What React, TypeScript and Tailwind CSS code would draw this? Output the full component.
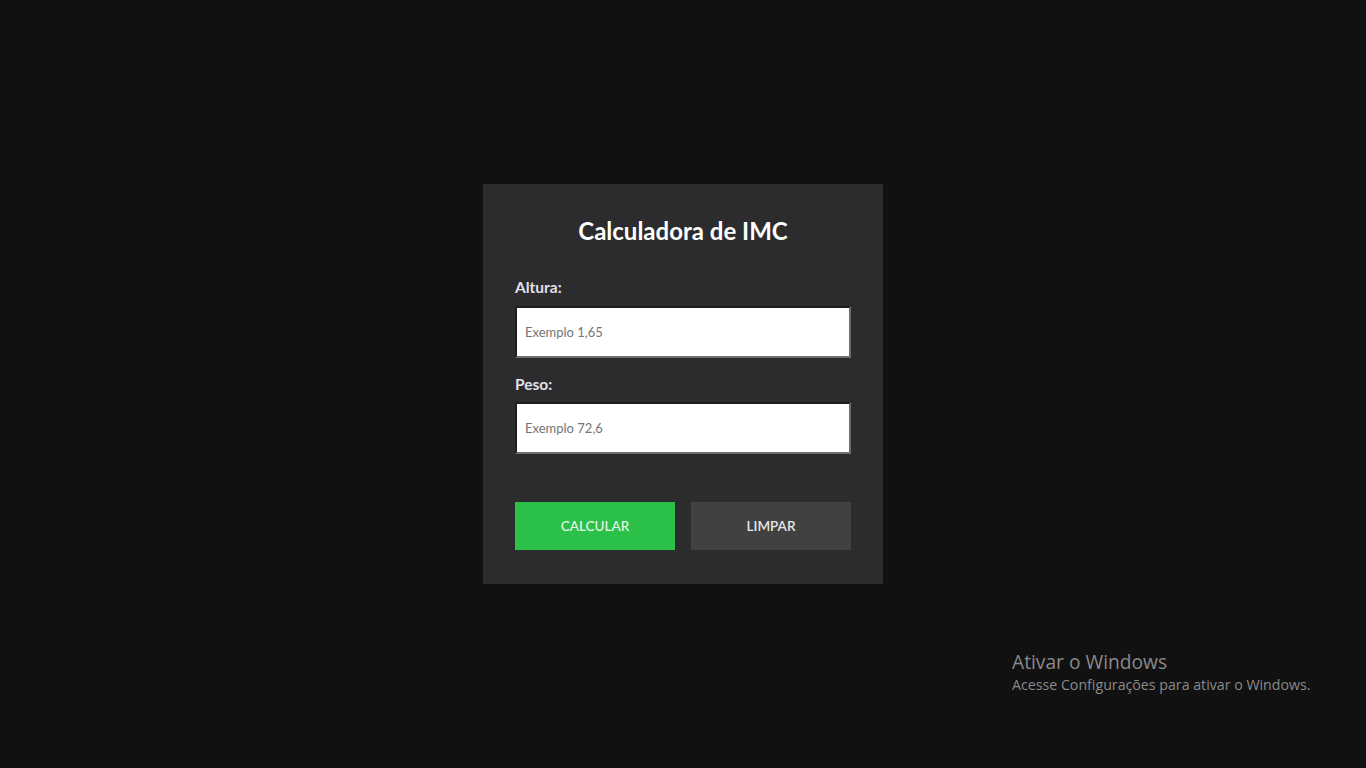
import React from "react";

export default function App() {
  return (
    <div className="relative w-full h-[768px] bg-[#111111] flex items-center justify-center" style={{ fontFamily: "Lato, 'Open Sans', sans-serif" }}>
      <div className="w-[400px] h-[400px] bg-[#2c2c2e] px-8 pt-8 flex flex-col">
        <h1 className="text-white text-[24px] font-bold text-center leading-[29px]">Calculadora de IMC</h1>
        <label className="mt-[33px] text-[#e2e0ea] text-[15.5px] font-bold leading-[18px]">Altura:</label>
        <input
          placeholder="Exemplo 1,65"
          className="mt-[10px] h-[52px] w-full bg-white border-2 border-t-[#1c1c1c] border-l-[#1c1c1c] border-r-[#6e6e6e] border-b-[#6e6e6e] px-[8px] text-[13px] text-[#333] placeholder:text-[#757575] outline-none"
        />
        <label className="mt-[17px] text-[#e2e0ea] text-[15.5px] font-bold leading-[18px]">Peso:</label>
        <input
          placeholder="Exemplo 72,6"
          className="mt-[9px] h-[52px] w-full bg-white border-2 border-t-[#1c1c1c] border-l-[#1c1c1c] border-r-[#6e6e6e] border-b-[#6e6e6e] px-[8px] text-[13px] text-[#333] placeholder:text-[#757575] outline-none"
        />
        <div className="mt-[48px] flex gap-4">
          <button className="w-[160px] h-[48px] pt-[1px] bg-[#2bc048] text-[#e8f5ea] text-[13.5px] font-medium uppercase">Calcular</button>
          <button className="w-[160px] h-[48px] pt-[1px] bg-[#414141] text-[#e6e6e6] text-[13.5px] font-semibold uppercase">Limpar</button>
        </div>
      </div>
      <div className="absolute left-[1012px] top-[649px] text-[#8a8a8a]" style={{ fontFamily: "'Open Sans', 'Noto Sans', sans-serif" }}>
        <div className="text-[19.2px] leading-[25px]">Ativar o Windows</div>
        <div className="text-[14.2px] leading-[22px]">Acesse Configurações para ativar o Windows.</div>
      </div>
    </div>
  );
}
